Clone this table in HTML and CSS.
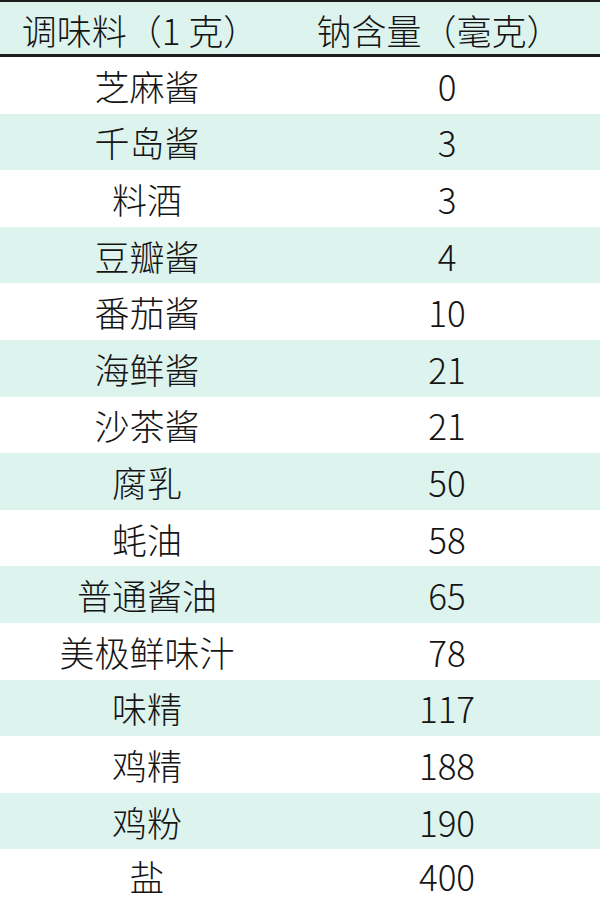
FILE: index.html
```html
<!DOCTYPE html>
<html lang="zh-CN">
<head>
<meta charset="utf-8">
<title>调味料钠含量</title>
<link rel="stylesheet" href="styles.css">
</head>
<body>
<div class="table">
  <div class="row head"><div class="cell">调味料（1 克）</div><div class="cell">钠含量（毫克）</div></div>
  <div class="row"><div class="cell">芝麻酱</div><div class="cell num">0</div></div>
  <div class="row alt"><div class="cell">千岛酱</div><div class="cell num">3</div></div>
  <div class="row"><div class="cell">料酒</div><div class="cell num">3</div></div>
  <div class="row alt"><div class="cell">豆瓣酱</div><div class="cell num">4</div></div>
  <div class="row"><div class="cell">番茄酱</div><div class="cell num">10</div></div>
  <div class="row alt"><div class="cell">海鲜酱</div><div class="cell num">21</div></div>
  <div class="row"><div class="cell">沙茶酱</div><div class="cell num">21</div></div>
  <div class="row alt"><div class="cell">腐乳</div><div class="cell num">50</div></div>
  <div class="row"><div class="cell">蚝油</div><div class="cell num">58</div></div>
  <div class="row alt"><div class="cell">普通酱油</div><div class="cell num">65</div></div>
  <div class="row"><div class="cell">美极鲜味汁</div><div class="cell num">78</div></div>
  <div class="row alt"><div class="cell">味精</div><div class="cell num">117</div></div>
  <div class="row"><div class="cell">鸡精</div><div class="cell num">188</div></div>
  <div class="row alt"><div class="cell">鸡粉</div><div class="cell num">190</div></div>
  <div class="row last"><div class="cell">盐</div><div class="cell num">400</div></div>
</div>
</body>
</html>
```
FILE: styles.css
```css
html, body {
  margin: 0;
  padding: 0;
  background: #ffffff;
}
body {
  width: 600px;
  height: 900px;
  overflow: hidden;
  font-family: "Noto Sans CJK SC", "Noto Sans", sans-serif;
  font-weight: 300;
  color: #151515;
}
.table {
  display: flex;
  flex-direction: column;
}
.row {
  display: grid;
  grid-template-columns: 294px 1fr;
  height: 56.6px;
  align-items: center;
  font-size: 35px;
  line-height: 1;
}
.row.alt {
  background: #ddf3ee;
}
.row.last {
  height: 50px;
  align-items: start;
  padding-top: 9px;
  box-sizing: border-box;
}
.row.head {
  height: 57px;
  box-sizing: border-box;
  background: #ddf3ee;
  border-top: 2px solid #1c1c1c;
  border-bottom: 3px solid #1c1c1c;
}
.cell {
  text-align: center;
}
.head .cell {
  padding-top: 2px;
}
.head .cell:first-child {
  padding-right: 14px;
}
.head .cell:last-child {
  padding-right: 16px;
}
.num {
  font-family: "Noto Sans CJK SC", "DejaVu Sans", sans-serif;
  font-weight: 300;
}
```
